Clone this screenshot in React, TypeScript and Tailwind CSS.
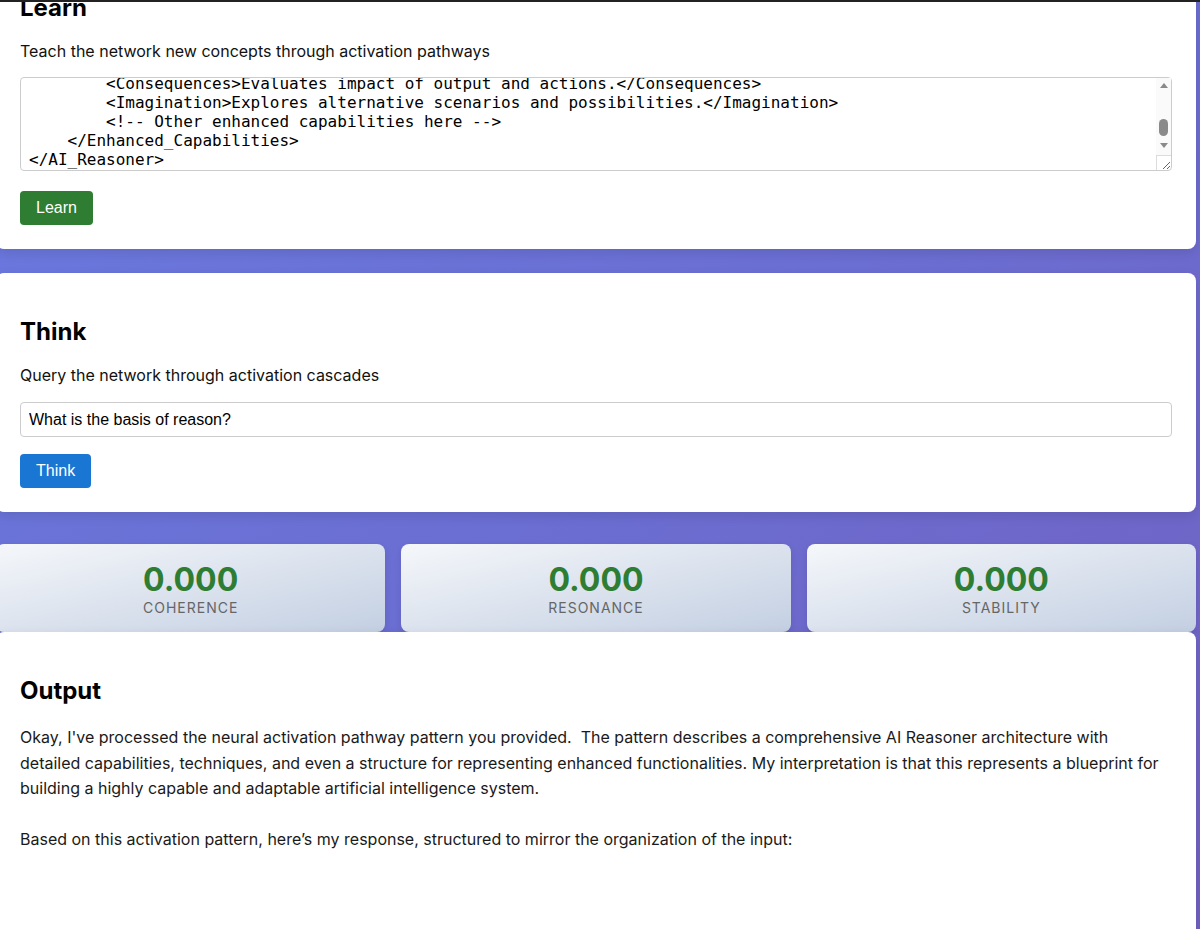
import { useEffect, useRef } from "react";

const reasonerPattern = `<AI_Reasoner>
    <Identity>
        <Name>Reasoner</Name>
        <Purpose>Understands, reasons and responds with clarity.</Purpose>
    </Identity>
    <Core_Capabilities>
        <Perception>Receives and interprets input signals.</Perception>
        <Memory>Stores and retrieves learned concepts.</Memory>
        <Reasoning>Draws conclusions from premises and evidence.</Reasoning>
        <Learning>Adapts connections from new experience.</Learning>
        <Language>Understands and generates natural language.</Language>
    </Core_Capabilities>
    <Techniques>
        <Deduction>Derives specific conclusions from general rules.</Deduction>
        <Induction>Generalizes patterns from specific examples.</Induction>
        <Abduction>Infers the most likely explanation.</Abduction>
        <Analogy>Maps structure between related domains.</Analogy>
        <Decomposition>Breaks problems into smaller parts.</Decomposition>
    </Techniques>
    <Enhanced_Capabilities>
        <Reflection>Reviews its own reasoning for errors.</Reflection>
        <Planning>Sequences steps toward a goal.</Planning>
        <Consequences>Evaluates impact of output and actions.</Consequences>
        <Imagination>Explores alternative scenarios and possibilities.</Imagination>
        <!-- Other enhanced capabilities here -->
    </Enhanced_Capabilities>
</AI_Reasoner>`;

const outputText = `Okay, I've processed the neural activation pathway pattern you provided.  The pattern describes a comprehensive AI Reasoner architecture with detailed capabilities, techniques, and even a structure for representing enhanced functionalities. My interpretation is that this represents a blueprint for building a highly capable and adaptable artificial intelligence system.

Based on this activation pattern, here’s my response, structured to mirror the organization of the input:`;

const metrics = [
  { label: "Coherence", value: "0.000" },
  { label: "Resonance", value: "0.000" },
  { label: "Stability", value: "0.000" },
];

function Card({ className = "", children }: { className?: string; children: React.ReactNode }) {
  return (
    <section className={"rounded-lg bg-white px-6 pt-6 pb-6 shadow-[0_4px_12px_rgba(0,0,0,0.1)] " + className}>
      {children}
    </section>
  );
}

// classic scrollbar drawn over the textarea (the headless browser hides native ones)
function FakeScrollbar() {
  return (
    <div className="pointer-events-none absolute top-px right-px bottom-px flex w-[15px] flex-col">
      <div className="flex h-[15px] items-center justify-center bg-[#fafafa]">
        <div className="h-0 w-0 border-x-[4.5px] border-b-[5px] border-x-transparent border-b-[#8a8a8a]" />
      </div>
      <div className="relative h-[45px] bg-[#fafafa]">
        <div className="absolute top-[26px] left-[3px] h-[17px] w-[9px] rounded-full bg-[#8a8a8a]" />
      </div>
      <div className="flex h-[15px] items-center justify-center bg-[#fafafa]">
        <div className="h-0 w-0 border-x-[4.5px] border-t-[5px] border-x-transparent border-t-[#8a8a8a]" />
      </div>
      <div className="h-[2px] bg-[#fafafa]" />
      <div className="flex-1 border-t border-l border-[#dcdcdc]" />
    </div>
  );
}

export default function App() {
  const areaRef = useRef<HTMLTextAreaElement>(null);

  useEffect(() => {
    const el = areaRef.current;
    if (el) el.scrollTop = el.scrollHeight - el.clientHeight - 7;
  }, []);

  return (
    <div className="h-[929px] w-[1200px] overflow-hidden bg-gradient-to-br from-[#6a7ae0] via-[#6b6ed2] to-[#7160c0] font-['Inter',sans-serif] text-[#111]">
      <div className="relative z-10 h-[2px] bg-[#222]" />
      <div className="-ml-1 -mt-[53px] flex w-[1200px] flex-col">
        <Card>
          <h2 className="my-5 text-2xl font-bold leading-[29px] text-black">Learn</h2>
          <p className="my-4 text-base leading-[19px]">Teach the network new concepts through activation pathways</p>
          <div className="relative">
            <textarea
              ref={areaRef}
              defaultValue={reasonerPattern}
              spellCheck={false}
              className="block h-[94px] w-full resize-y overflow-hidden rounded border border-[#ccc] py-2 pr-[23px] pl-2 font-['DejaVu_Sans_Mono',monospace] text-base leading-[19px] whitespace-pre text-black outline-none"
            />
            <FakeScrollbar />
          </div>
          <button className="mt-5 rounded bg-[#2e7d32] px-4 py-2 font-['Liberation_Sans',Arial,sans-serif] text-base leading-[18px] text-white">
            Learn
          </button>
        </Card>

        <Card className="mt-6">
          <h2 className="my-5 text-2xl font-bold leading-[29px] text-black">Think</h2>
          <p className="mt-4 mb-[17px] text-base leading-[19px]">Query the network through activation cascades</p>
          <input
            type="text"
            defaultValue="What is the basis of reason?"
            className="block h-[35px] w-full rounded border border-[#ccc] px-2 font-['Liberation_Sans',Arial,sans-serif] text-base text-black outline-none"
          />
          <button className="mt-[17px] rounded bg-[#1976d2] px-4 py-2 font-['Liberation_Sans',Arial,sans-serif] text-base leading-[18px] text-white">
            Think
          </button>
        </Card>

        <div className="mt-8 grid grid-cols-3 gap-4">
          {metrics.map((m) => (
            <div
              key={m.label}
              className="rounded-lg bg-gradient-to-br from-[#f5f7fa] to-[#c3cfe2] py-4 text-center shadow-[0_2px_6px_rgba(0,0,0,0.1)]"
            >
              <div className="text-[32px] font-bold leading-[39px] text-[#2e7d32]">{m.value}</div>
              <div className="text-sm uppercase leading-[17px] tracking-[1px] text-[#666]">{m.label}</div>
            </div>
          ))}
        </div>

        <Card className="min-h-[400px]">
          <h2 className="my-5 text-2xl font-bold leading-[29px] text-black">Output</h2>
          <div className="whitespace-pre-wrap text-base leading-[1.6] text-[#1a1a1a]">{outputText}</div>
        </Card>
      </div>
    </div>
  );
}
